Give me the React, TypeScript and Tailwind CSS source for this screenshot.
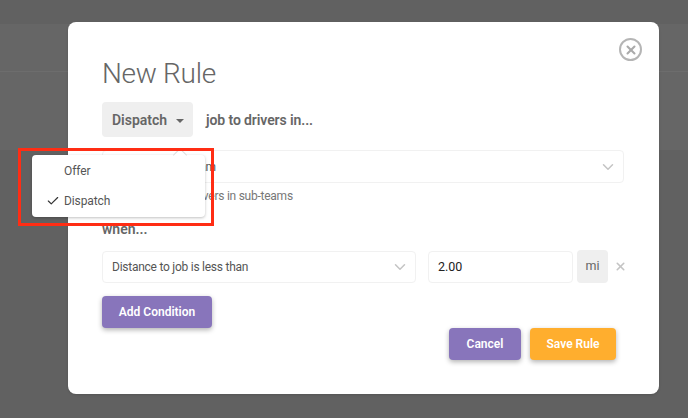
import { Check, ChevronDown, X } from 'lucide-react'

const font = { fontFamily: 'Roboto, "Liberation Sans", sans-serif' }

function SelectBox({ label, className }: { label: string; className: string }) {
  return (
    <div className={`flex shrink-0 items-center justify-between rounded border border-[#f1f1f1] bg-white pl-[9px] pr-[6px] text-[12px] tracking-[-0.25px] text-[#555] ${className}`}>
      <span>{label}</span>
      <ChevronDown size={18} strokeWidth={2} className="text-[#c4c4c4]" />
    </div>
  )
}

export default function App() {
  return (
    <div style={font} className="relative h-[418px] w-[688px] overflow-hidden bg-[#616161]">
      {/* page behind the overlay */}
      <div className="pt-[24px]">
        <div className="h-[48px] border-b border-[#6d6d6d] bg-[#666666]" />
        <div className="h-[78px] bg-[#666666]" />
      </div>

      <div className="absolute left-[68px] top-[22px] flex h-[372px] w-[591px] flex-col rounded-[8px] bg-white pl-[34px] pr-[35px] pt-[32px] shadow-sm">
        <button className="absolute right-[17px] top-[16px] flex h-[23px] w-[23px] items-center justify-center rounded-full border-[2.5px] border-[#b5b5b5] text-[#aaa]">
          <X size={14} strokeWidth={3.5} />
        </button>

        <h1 className="text-[28px] font-light leading-[40px] tracking-[-0.3px] text-[#666]">New Rule</h1>

        <div className="mt-[8px] flex items-center text-[14px] font-semibold text-[#666]">
          <div className="flex h-[35px] w-[91px] items-center rounded bg-[#efefef] pl-[10px] pt-[2px]">
            Dispatch
            <span className="ml-[9px] h-0 w-0 border-x-[4px] border-t-[4px] border-x-transparent border-t-[#666]" />
          </div>
          <span className="ml-[13px] pt-[2px] tracking-[-0.1px]">job to drivers in...</span>
        </div>

        <SelectBox label="All drivers on a team" className="mt-[13px] h-[33px] w-[522px]" />
        <div className="mt-[5px] pl-[48px] text-[12px] leading-[16px] tracking-[-0.25px] text-[#777]">Include drivers in sub-teams</div>
        <div className="mt-[16px] text-[14px] font-semibold leading-[18px] text-[#666]">when...</div>

        <div className="mt-[12px] flex items-center">
          <SelectBox label="Distance to job is less than" className="h-[32px] w-[314px]" />
          <input
            readOnly
            value="2.00"
            className="ml-[12px] h-[32px] w-[145px] shrink-0 rounded border border-[#f1f1f1] pl-[9px] text-[12.5px] text-[#222] outline-none"
          />
          <div className="ml-[4px] flex h-[33px] w-[31px] shrink-0 items-center justify-center rounded bg-[#efefef] text-[12.5px] text-[#666]">mi</div>
          <X size={13} strokeWidth={3} className="ml-[6px] shrink-0 text-[#c4c4c4]" />
        </div>

        <button className="mt-[13px] h-[32px] w-[110px] rounded bg-[#8875bb] text-[12px] font-semibold text-white shadow-[0_2px_5px_rgba(0,0,0,0.3)]">
          Add Condition
        </button>

        <div className="flex justify-end gap-[9px] pr-[8px]">
          <button className="h-[32px] w-[72px] rounded bg-[#8875bb] text-[12px] font-semibold text-white shadow-[0_2px_5px_rgba(0,0,0,0.3)]">
            Cancel
          </button>
          <button className="h-[32px] w-[86px] rounded bg-[#ffae2e] text-[12px] font-semibold text-white shadow-[0_2px_5px_rgba(0,0,0,0.3)]">
            Save Rule
          </button>
        </div>
      </div>

      {/* dropdown menu, above the modal */}
      <div className="absolute left-[32px] top-[155px] w-[173px] rounded bg-white py-[1px] text-[12px] tracking-[-0.1px] text-[#555] shadow-[0_1px_3px_rgba(0,0,0,0.25)]">
        <div className="absolute left-[143px] top-[-5px] h-[10px] w-[10px] rotate-45 border-l border-t border-[#ddd] bg-white" />
        <div className="flex h-[30px] items-center pl-[32px]">Offer</div>
        <div className="flex h-[30px] items-center pl-[14px]">
          <Check size={14} strokeWidth={2} className="mr-[4px] text-[#333]" />
          Dispatch
        </div>
      </div>

      {/* red annotation box */}
      <div className="absolute left-[18px] top-[148px] h-[78px] w-[196px] border-[3px] border-[#ff2d14]" />
    </div>
  )
}
